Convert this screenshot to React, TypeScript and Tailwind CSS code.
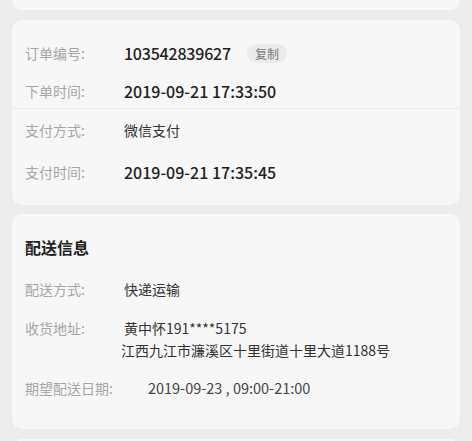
const font = { fontFamily: '"Noto Sans CJK SC", "Noto Sans", sans-serif' };

function Row({
  label,
  children,
  className = "gap-[39px]",
}: {
  label: string;
  children: React.ReactNode;
  className?: string;
}) {
  return (
    <div className={`flex items-start px-[13px] leading-[22px] ${className}`}>
      <span className="shrink-0 text-[14px] text-[#a6a6a6]">{label}</span>
      <div className="text-[14px] text-[#333]">{children}</div>
    </div>
  );
}

export default function App() {
  return (
    <div className="h-[441px] overflow-hidden bg-[#ececec]" style={font}>
      <div className="mx-3 -mt-10 h-[50px] rounded-[10px] bg-[#f7f7f7]" />

      <section className="mx-3 mt-[10px] rounded-[10px] bg-[#f7f7f7] pt-[22px] pb-[22px]">
        <Row label="订单编号:">
          <div className="flex items-center gap-4">
            <span className="text-[16px] font-medium tracking-[-0.2px] text-[#222]">103542839627</span>
            <span className="rounded-full bg-[#ebebeb] px-[8px] text-[12px] leading-[19px] text-[#777]">复制</span>
          </div>
        </Row>
        <Row label="下单时间:" className="mt-4 gap-[39px]">
          <span className="block text-[16px] font-medium leading-[22px] text-[#222]">2019-09-21 17:33:50</span>
        </Row>
        <div className="mt-[6px] h-px bg-[#e9e9e9]" />
        <Row label="支付方式:" className="mt-[10px] gap-[39px]">
          微信支付
        </Row>
        <Row label="支付时间:" className="mt-5 gap-[39px]">
          <span className="block text-[16px] font-medium leading-[22px] text-[#222]">2019-09-21 17:35:45</span>
        </Row>
      </section>

      <section className="mx-3 mt-[9px] rounded-[10px] bg-[#f7f7f7] pt-[22px] pb-[30px]">
        <h2 className="px-[13px] text-[16px] font-bold leading-[22px] text-[#222]">配送信息</h2>
        <Row label="配送方式:" className="mt-5 gap-[39px]">
          快递运输
        </Row>
        <Row label="收货地址:" className="mt-[17px] gap-[39px]">
          <p>黄中怀191****5175</p>
          <p className="-ml-[3px]">江西九江市濂溪区十里街道十里大道1188号</p>
        </Row>
        <Row label="期望配送日期:" className="mt-4 gap-[35px]">
          <span className="block text-[14.5px] leading-[22px] text-[#444]">2019-09-23 , 09:00-21:00</span>
        </Row>
      </section>

      <div className="mx-3 mt-[10px] h-10 rounded-[10px] bg-[#f7f7f7]" />
    </div>
  );
}
